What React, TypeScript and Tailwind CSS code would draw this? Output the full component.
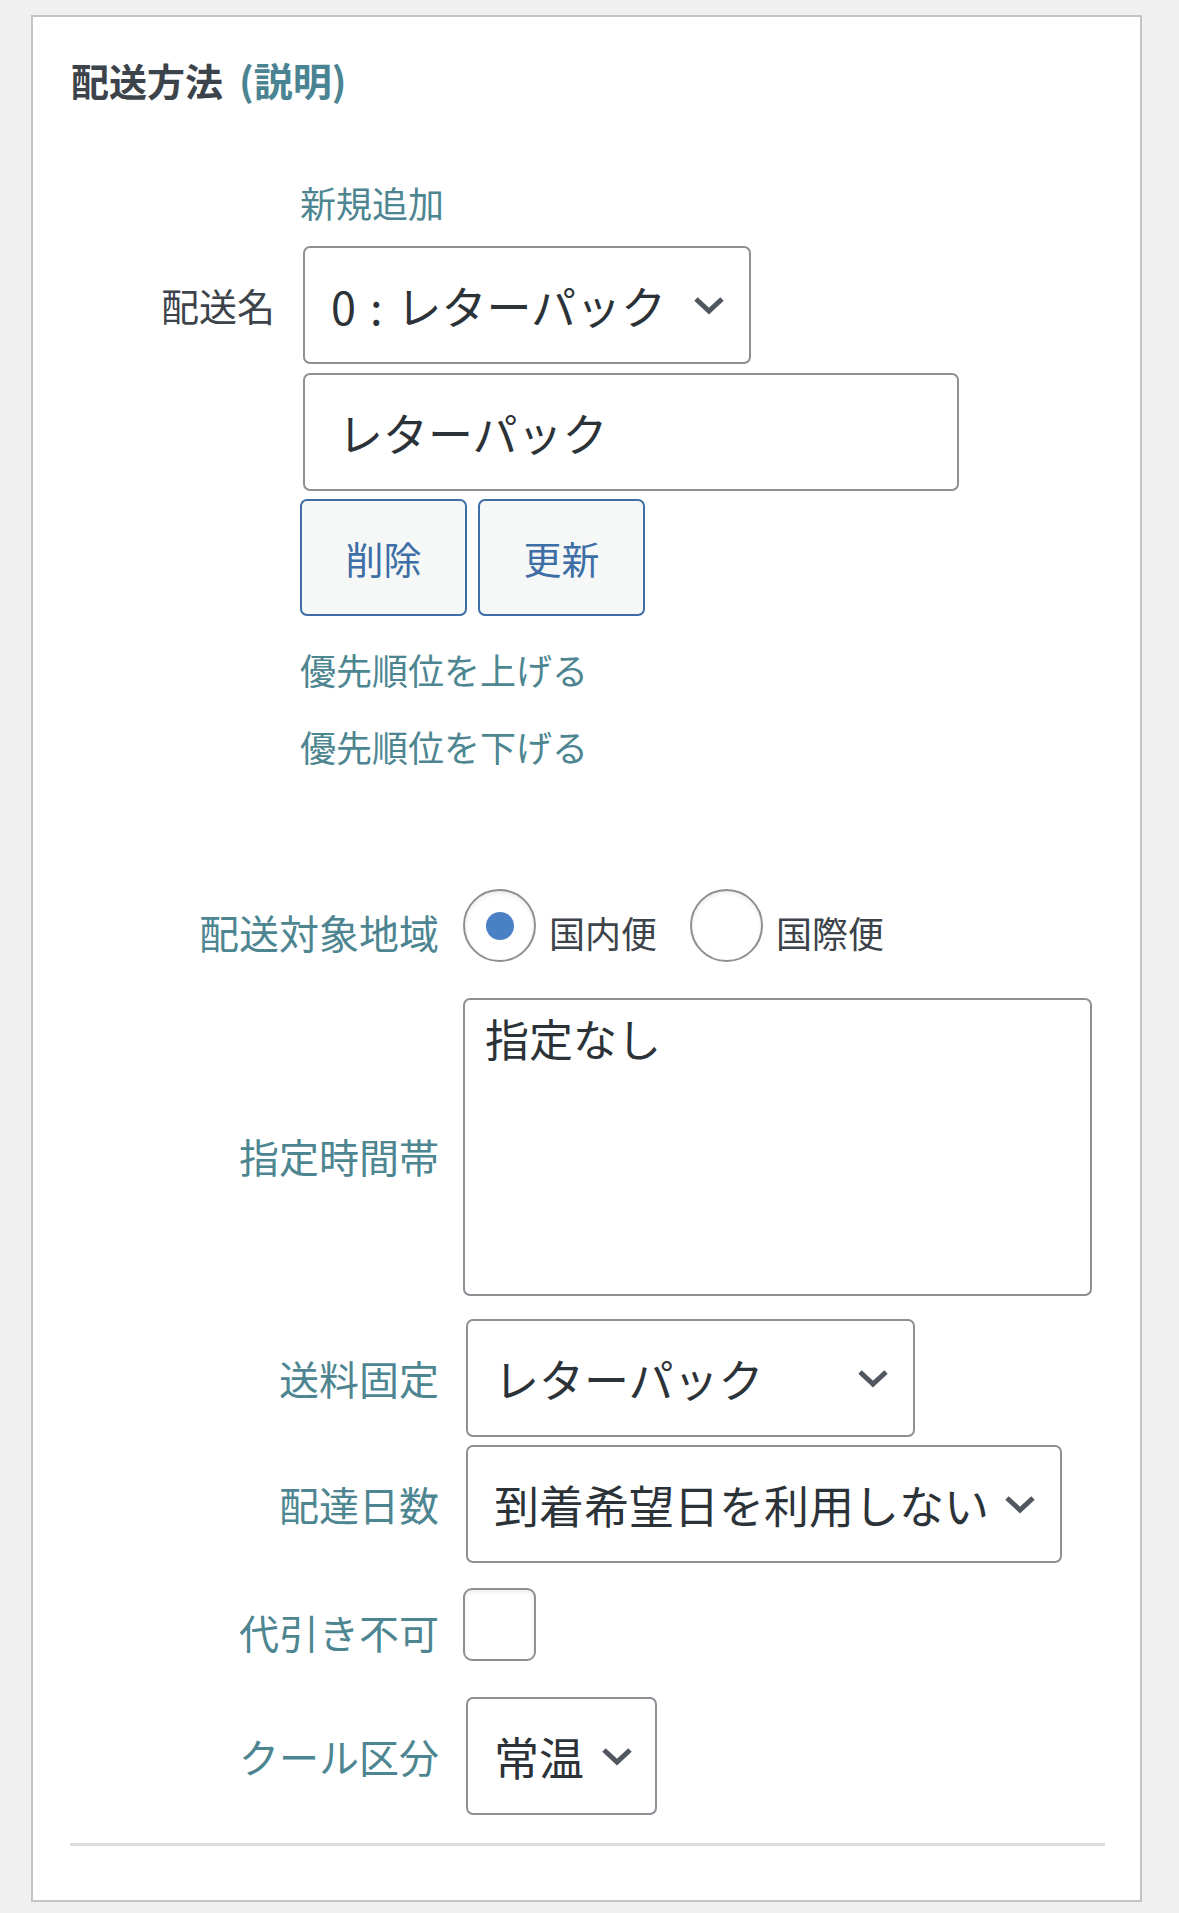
import React from "react";

const font = { fontFamily: '"Noto Sans CJK JP", "Noto Sans", sans-serif' };

function Chevron() {
  return (
    <svg width="32" height="19" viewBox="0 0 32 19" fill="none" className="shrink-0">
      <path d="M3 3 L16 15 L29 3" stroke="#50575e" strokeWidth="5" strokeLinejoin="miter" />
    </svg>
  );
}

function Select({ children, width, pr = "pr-[24px]" }: { children: React.ReactNode; width: string; pr?: string }) {
  return (
    <div
      className={`ml-[3px] h-[118px] ${width} flex items-center justify-between pl-[26px] ${pr} border-2 border-[#8c8f94] rounded-[7px] bg-white text-[45px] text-[#2c3338] leading-none`}
    >
      <span className="whitespace-nowrap">{children}</span>
      <Chevron />
    </div>
  );
}

function Row({ label, children, labelPad = "", className = "" }: { label: string; children: React.ReactNode; labelPad?: string; className?: string }) {
  return (
    <div className={`flex items-center ${className}`}>
      <div className={`w-[430px] pr-[24px] text-right text-[40px] leading-[52px] text-[#4d8591] ${labelPad}`}>{label}</div>
      <div className="flex-1 flex items-center">{children}</div>
    </div>
  );
}

export default function App() {
  return (
    <div className="min-h-[1913px] bg-[#f0f0f1] pt-[15px]" style={font}>
      <div className="ml-[31px] w-[1111px] h-[1887px] border-2 border-[#c3c4c7] bg-white">
        {/* Heading */}
        <h2 className="pt-[37px] pl-[38px] text-[38px] leading-[50px] font-semibold text-[#3c434a]">
          配送方法<span className="ml-[16px] text-[#4a8391] text-[39px]">(説明)</span>
        </h2>

        {/* Shipping name */}
        <div className="mt-[73px] grid grid-cols-[267px_1fr]">
          <div />
          <div className="text-[36px] leading-[48px] text-[#4d8591]">新規追加</div>

          <div className="mt-[20px] flex items-center justify-end pr-[25px] text-[38px] leading-[50px] text-[#3c434a]">配送名</div>
          <div className="mt-[20px]">
            <Select width="w-[448px]">
              0<span className="mx-[14px]">:</span>レターパック
            </Select>
          </div>

          <div />
          <div className="mt-[9px]">
            <div className="ml-[3px] w-[656px] h-[118px] flex items-center pl-[33px] border-2 border-[#8c8f94] rounded-[7px] text-[45px] leading-none text-[#2c3338]">
              レターパック
            </div>
          </div>

          <div />
          <div className="mt-[8px] flex gap-[11px]">
            <button className="w-[167px] h-[117px] border-2 border-[#3d6ea5] rounded-[7px] bg-[#f6f7f7] text-[38px] text-[#3d6ea5]">削除</button>
            <button className="w-[167px] h-[117px] border-2 border-[#3d6ea5] rounded-[7px] bg-[#f6f7f7] text-[38px] text-[#3d6ea5]">更新</button>
          </div>

          <div />
          <div className="mt-[29px] text-[36px] leading-[48px] text-[#4d8591]">優先順位を上げる</div>
          <div />
          <div className="mt-[29px] text-[36px] leading-[48px] text-[#4d8591]">優先順位を下げる</div>
        </div>

        {/* Details table */}
        <Row label="配送対象地域" labelPad="pt-[12px]" className="mt-[118px] h-[75px]">
          <span className="w-[73px] h-[73px] rounded-full border-2 border-[#8c8f94] flex items-center justify-center shadow-[inset_0_2px_4px_rgba(0,0,0,0.08)]">
            <span className="w-[28px] h-[28px] rounded-full bg-[#4a80c4]" />
          </span>
          <span className="ml-[13px] pt-[12px] text-[36px] leading-[48px] text-[#3c434a]">国内便</span>
          <span className="ml-[33px] w-[73px] h-[73px] rounded-full border-2 border-[#8c8f94] shadow-[inset_0_2px_4px_rgba(0,0,0,0.08)]" />
          <span className="ml-[13px] pt-[12px] text-[36px] leading-[48px] text-[#3c434a]">国際便</span>
        </Row>

        <Row label="指定時間帯" labelPad="pt-[18px]" className="mt-[35px]">
          <div className="w-[629px] h-[298px] border-2 border-[#8c8f94] rounded-[7px] pt-[8px] pl-[20px] text-[44px] leading-[60px] text-[#2c3338]">
            指定なし
          </div>
        </Row>

        <Row label="送料固定" className="mt-[23px]">
          <Select width="w-[449px]">レターパック</Select>
        </Row>

        <Row label="配達日数" className="mt-[8px]">
          <Select width="w-[596px]" pr="pr-[24px]">到着希望日を利用しない</Select>
        </Row>

        <Row label="代引き不可" labelPad="pt-[14px]" className="mt-[25px]">
          <span className="w-[73px] h-[73px] rounded-[9px] border-2 border-[#8c8f94] shadow-[inset_0_2px_4px_rgba(0,0,0,0.08)]" />
        </Row>

        <Row label="クール区分" className="mt-[36px]">
          <Select width="w-[191px]" pr="pr-[22px]">常温</Select>
        </Row>

        <div className="mt-[28px] ml-[37px] w-[1035px] h-[3px] bg-[#dcdcde]" />
      </div>
    </div>
  );
}
